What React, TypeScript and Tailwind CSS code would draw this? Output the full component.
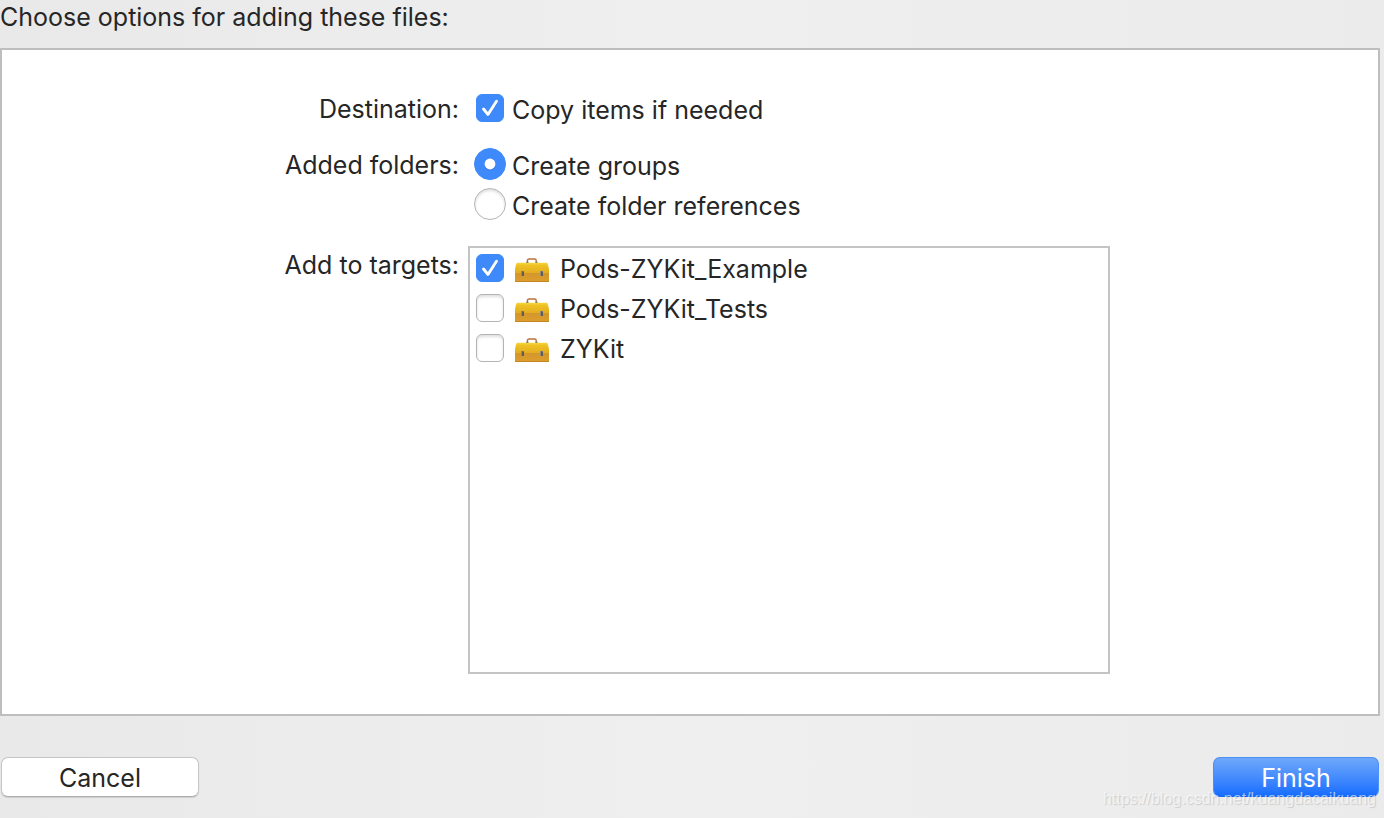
import { useState, type InputHTMLAttributes } from "react";

type ControlProps = InputHTMLAttributes<HTMLInputElement>;

function Checkbox(props: ControlProps) {
  return (
    <span className="relative mx-[2px] flex size-7 shrink-0">
      <input
        type="checkbox"
        className="peer size-7 appearance-none rounded-[6px] border border-[#b4b4b4] bg-white shadow-[inset_0_2px_3px_rgba(0,0,0,0.13)] checked:border-[#3f8afb] checked:bg-[#3f8afb] checked:shadow-none"
        {...props}
      />
      <svg
        viewBox="0 0 28 28"
        className="pointer-events-none absolute inset-0 hidden size-7 peer-checked:block"
        fill="none"
        strokeLinecap="round"
        strokeLinejoin="round"
        strokeWidth="2.9"
      >
        <path d="M7.5 16 L12 21.5 L20.5 8" stroke="#2c6fd8" strokeOpacity="0.5" />
        <path d="M7.5 15 L12 20.5 L20.5 7.2" stroke="#ffffff" />
      </svg>
    </span>
  );
}

function Radio(props: ControlProps) {
  return (
    <span className="relative flex size-8 shrink-0">
      <input
        type="radio"
        className="peer size-8 appearance-none rounded-full border border-[#b4b4b4] bg-white shadow-[inset_0_2px_3px_rgba(0,0,0,0.13)] checked:border-[#3f8afb] checked:bg-[#3f8afb] checked:shadow-none"
        {...props}
      />
      <svg viewBox="0 0 32 32" className="pointer-events-none absolute inset-0 hidden size-8 peer-checked:block">
        <circle cx="16" cy="17" r="5.4" fill="#2c6fd8" fillOpacity="0.55" />
        <circle cx="16" cy="16" r="5.4" fill="#ffffff" />
      </svg>
    </span>
  );
}

function ToolboxIcon() {
  return (
    <svg viewBox="0 0 34 24" className="h-6 w-[34px] shrink-0" aria-hidden="true">
      <defs>
        <linearGradient id="toolbox-lid" x1="0" y1="0" x2="0" y2="1">
          <stop offset="0" stopColor="#f6d63c" />
          <stop offset="0.25" stopColor="#efc223" />
          <stop offset="1" stopColor="#e2ac22" />
        </linearGradient>
        <linearGradient id="toolbox-body" x1="0" y1="0" x2="0" y2="1">
          <stop offset="0" stopColor="#d4962a" />
          <stop offset="1" stopColor="#dc9f2c" />
        </linearGradient>
      </defs>
      <path d="M12.4 4.6 V2.6 Q12.4 1 14 1 H19.6 Q21.2 1 21.2 2.6 V4.6" fill="none" stroke="#b9713f" strokeWidth="1.4" />
      <path d="M11.3 4.4 H13.4 M20.4 4.4 H22.5" stroke="#6b6256" strokeWidth="1.2" />
      <path d="M2.6 4.8 H31.4 Q32.6 4.8 32.9 6.2 L34 11 V15.5 H0 V11 L1.1 6.2 Q1.4 4.8 2.6 4.8 Z" fill="url(#toolbox-lid)" />
      <path d="M0 15 H34 V23.4 Q34 24 33.4 24 H0.6 Q0 24 0 23.4 Z" fill="url(#toolbox-body)" />
      <path d="M0.3 23.6 H33.7" stroke="#b97f22" strokeWidth="0.8" />
      <path d="M6 13 H9 V18 H6 Z M25 13 H28 V18 H25 Z" fill="#8e8a7c" />
      <path d="M7 13.6 H9 V18 H7 Z M26 13.6 H28 V18 H26 Z" fill="#5f5b55" />
    </svg>
  );
}

const targets = [
  { name: "Pods-ZYKit_Example", selected: true },
  { name: "Pods-ZYKit_Tests", selected: false },
  { name: "ZYKit", selected: false },
];

export default function App() {
  const [folderMode, setFolderMode] = useState("groups");

  return (
    <main className="relative flex min-h-screen flex-col bg-linear-to-r from-[#e9e9e9] via-[#eeefee] to-[#ebebeb] pr-1 font-['Inter',sans-serif] text-[25px] leading-8 text-[#262626]">
      <h1 className="h-12 pt-px">Choose options for adding these files:</h1>

      <form
        id="options"
        onSubmit={(event) => event.preventDefault()}
        className="grid flex-1 grid-cols-[180px_minmax(0,642px)] grid-rows-[auto_auto_1fr] justify-center gap-x-[9px] border-2 border-[#bebebe] bg-white pt-[38px] pb-10 pl-[9px]"
      >
        <span className="flex h-10 items-center justify-end pt-0.5">Destination:</span>
        <label className="mb-4 flex h-10 items-center gap-1.5 pl-1.5">
          <Checkbox defaultChecked />
          <span className="pt-1">Copy items if needed</span>
        </label>

        <span id="folders-label" className="flex h-10 items-center justify-end pt-0.5">
          Added folders:
        </span>
        <div role="radiogroup" aria-labelledby="folders-label" className="mb-[22px]">
          <label className="flex h-10 items-center gap-1.5 pl-1.5">
            <Radio name="folders" checked={folderMode === "groups"} onChange={() => setFolderMode("groups")} />
            <span className="pt-1">Create groups</span>
          </label>
          <label className="flex h-10 items-center gap-1.5 pl-1.5">
            <Radio name="folders" checked={folderMode === "references"} onChange={() => setFolderMode("references")} />
            <span className="pt-1">Create folder references</span>
          </label>
        </div>

        <span id="targets-label" className="flex h-9 items-center justify-end pt-0.5">
          Add to targets:
        </span>
        <ul aria-labelledby="targets-label" className="border-2 border-[#c4c4c4]">
          {targets.map((target) => (
            <li key={target.name}>
              <label className="flex h-10 items-center pl-1">
                <Checkbox defaultChecked={target.selected} />
                <span className="mt-1 mr-[11px] ml-[9px]">
                  <ToolboxIcon />
                </span>
                <span className="pt-0.5">{target.name}</span>
              </label>
            </li>
          ))}
        </ul>
      </form>

      <footer className="flex h-[102px] items-start justify-between pt-[41px] pl-px">
        <button
          type="button"
          className="h-10 w-[198px] rounded-[7px] border border-[#c6c6c6] border-b-[#adadad] bg-white pt-0.5 shadow-[0_1px_1px_rgba(0,0,0,0.12)]"
        >
          Cancel
        </button>
        <button
          type="submit"
          form="options"
          className="mr-px h-10 w-[166px] rounded-[7px] border border-[#4a90f5] border-b-[#1268f5] bg-linear-to-b from-[#6ea8fa] to-[#146cfe] pt-0.5 text-white"
        >
          Finish
        </button>
      </footer>

      <p className="pointer-events-none absolute right-2 bottom-[9px] font-['Liberation_Sans',sans-serif] text-[16px] leading-5 text-white/60 [text-shadow:1px_1px_1px_rgba(0,0,0,0.14)]">
        https://blog.csdn.net/kuangdacaikuang
      </p>
    </main>
  );
}
